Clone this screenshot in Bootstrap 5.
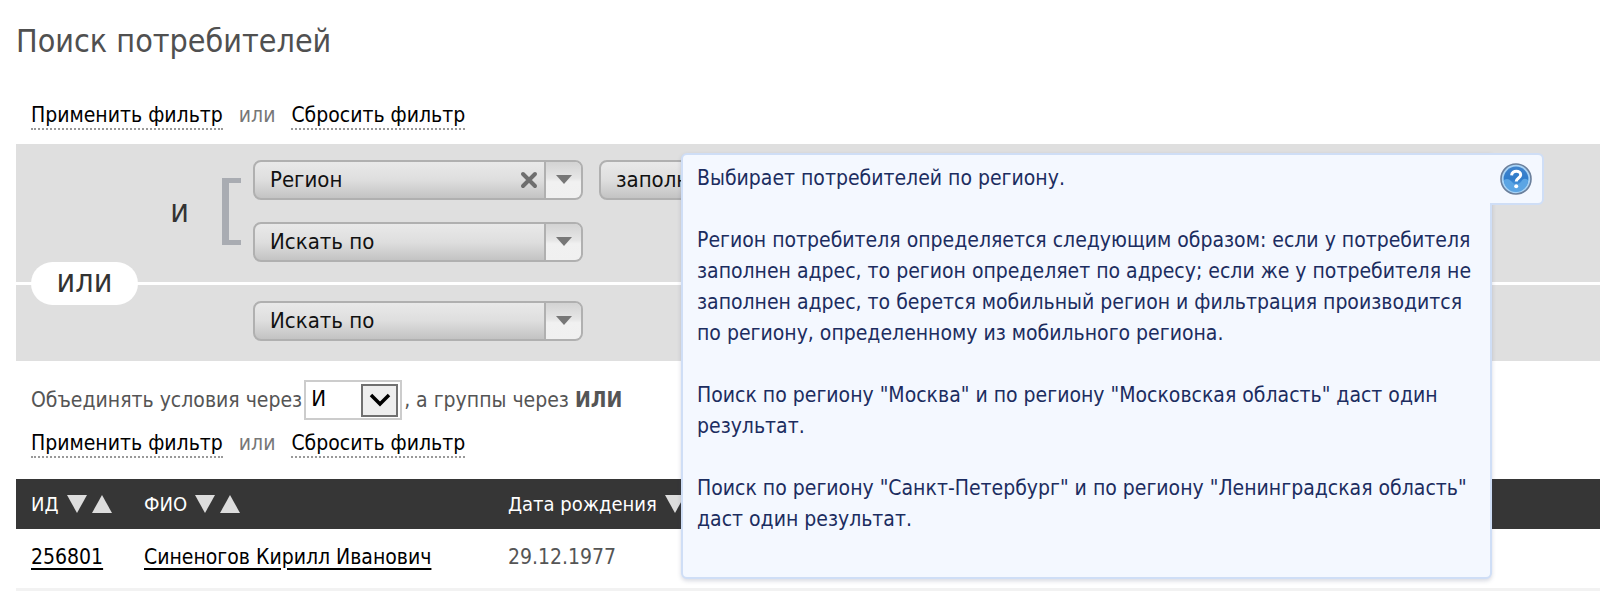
<!DOCTYPE html>
<html lang="ru">
<head>
<meta charset="utf-8">
<meta name="viewport" content="width=device-width, initial-scale=1">
<title>Поиск потребителей</title>
<link href="https://cdn.jsdelivr.net/npm/bootstrap@5.3.0/dist/css/bootstrap.min.css" rel="stylesheet">
<style>
body{font-family:"DejaVu Sans Condensed","DejaVu Sans",sans-serif;font-stretch:condensed;font-size:21px;line-height:30px;color:#555;background:#fff}
.page{padding-left:16px}
.page-title{font-size:32px;line-height:40px;color:#505050;margin:0;padding:21px 0 41px}
.filter-links{padding:0 0 14px 15px;gap:16px;line-height:26px}
.filter-links a{color:#000;text-decoration:none;border-bottom:2px dotted #999;white-space:nowrap}
.filter-links span{color:#777}
.rule-group{background:#dfdfdf;padding:16px 0 20px}
.rule-group+.rule-group{border-top:3px solid #fff}
.join-label{width:206px;padding-right:33px;font-size:32px;color:#333}
.bracket{width:19px;height:67px;border:5px solid #a9acb2;border-left-width:7px;border-right:0;margin-right:12px}
.rules{gap:22px}
.no-bracket{margin-left:237px}
.combo{width:330px;height:40px;border:2px solid #b0b0b0;border-radius:8px;background:linear-gradient(#e9e9e9,#dedede 50%,#c3c3c3);overflow:hidden}
.combo select{appearance:none;border:0;background:transparent;color:#111;font-size:22px;line-height:26px;padding:5px 0 5px 15px;min-width:0;outline-offset:-2px}
.combo button{border:0;padding:0;background:transparent}
.combo .clear-btn{width:30px}
.combo .drop-btn{width:37px;border-left:2px solid #b0b0b0;background:linear-gradient(#d3d3d3,#e6e6e6 45%,#f1f1f1 55%,#f0f0f0)}
.or-pill{left:15px;top:118px;width:107px;height:43px;border-radius:22px;background:#fff;font-size:32px;line-height:38px;color:#333;z-index:1}
.hint{left:82px;top:-7px;width:811px;height:426px;background:#f4f8ff;border:2px solid #cfdef6;border-radius:6px 0 6px 6px;box-shadow:0 2px 4px rgba(60,70,110,.2);color:#1c2d60;font-size:21px;line-height:31px;padding:8px 14px;z-index:3}
.hint p{margin:0 0 31px}
.hint-tab{left:100%;top:-2px;width:54px;height:52px;background:#f4f8ff;border:2px solid #cfdef6;border-left:0;border-radius:0 6px 6px 0;padding:0}
.join-row{padding:19px 0 0 15px}
.join-row .op-select{width:98px;height:40px;border:2px solid #ccc;margin:0 2px;background:#fff}
.op-select select{appearance:none;border:0;background:transparent;color:#000;font-size:22px;line-height:26px;padding:3px 0 5px 5px}
.op-select button{width:37px;height:33px;border:2px solid #707070;background:#eee;padding:0;margin-right:2px}
.filter-links.lower{padding-top:10px;padding-bottom:21px}
.people{width:100%;table-layout:fixed;margin:0}
.people th{background:#363636;color:#fff;font-weight:400;font-size:20px;height:50px;padding:0;white-space:nowrap}
.people td{height:61px;padding:0 0 4px;border-bottom:4px solid #f2f2f2;white-space:nowrap}
.people th:first-child,.people td:first-child{padding-left:15px}
.people a{color:#000;text-underline-offset:4px;text-decoration-thickness:2px}
.people button{border:0;background:none;padding:0;width:20px;margin-left:8px;line-height:1}
.people button+button{margin-left:5px}
.people svg{display:block}
.people .c-id{width:128px}
.people .c-name{width:364px}
</style>
</head>
<body>
<main class="page">
  <h1 class="page-title fw-normal">Поиск потребителей</h1>

  <div class="filter-links d-flex">
    <a href="#">Применить фильтр</a><span>или</span><a href="#">Сбросить фильтр</a>
  </div>

  <section class="position-relative" aria-label="Условия фильтра">
    <div class="rule-group d-flex align-items-center">
      <div class="join-label text-end flex-shrink-0">и</div>
      <div class="bracket flex-shrink-0"></div>
      <div class="rules d-flex flex-column">
        <div class="d-flex gap-3">
          <div class="combo d-flex flex-shrink-0">
            <select class="flex-grow-1" aria-label="Поле"><option>Регион</option></select>
            <button class="clear-btn d-flex align-items-center justify-content-center" type="button" aria-label="Очистить"><svg width="18" height="18" viewBox="0 0 18 18"><path d="M3 3l12 12M15 3L3 15" stroke="#6e6e6e" stroke-width="4" stroke-linecap="round"/></svg></button>
            <button class="drop-btn d-flex align-items-center justify-content-center" type="button" aria-label="Открыть"><svg width="16" height="10" viewBox="0 0 16 10"><path d="M0 0h16L8 9z" fill="#777"/></svg></button>
          </div>
          <div class="position-relative">
            <div class="combo d-flex">
              <select class="flex-grow-1" aria-label="Условие"><option>заполнен</option></select>
              <button class="drop-btn d-flex align-items-center justify-content-center" type="button" aria-label="Открыть условие"><svg width="16" height="10" viewBox="0 0 16 10"><path d="M0 0h16L8 9z" fill="#777"/></svg></button>
            </div>
            <div class="hint position-absolute" role="tooltip">
              <p>Выбирает потребителей по региону.</p>
              <p>Регион потребителя определяется следующим образом: если у потребителя заполнен адрес, то регион определяет по адресу; если же у потребителя не заполнен адрес, то берется мобильный регион и фильтрация производится по региону, определенному из мобильного региона.</p>
              <p>Поиск по региону "Москва" и по региону "Московская область" даст один результат.</p>
              <p>Поиск по региону "Санкт-Петербург" и по региону "Ленинградская область" даст один результат.</p>
              <button class="hint-tab position-absolute d-flex align-items-center justify-content-center" type="button" aria-label="Справка">
                <svg width="32" height="32" viewBox="0 0 32 32"><defs><linearGradient id="hg" x1="0" y1="0" x2="0" y2="1"><stop offset="0" stop-color="#3f83cc"/><stop offset=".5" stop-color="#2f7ccb"/><stop offset="1" stop-color="#65b2ee"/></linearGradient></defs><circle cx="16" cy="16" r="15" fill="#a8d3f5" stroke="#6a7f9c" stroke-width="1.6"/><circle cx="16" cy="16" r="12.4" fill="url(#hg)"/><path d="M4 17a12 12 0 0 0 24 0c-3-2-5-2-7 2l-5 4-5-5c-2-2-4-3-7-1z" fill="#5ba5e4"/><path d="M11.6 12.4c.3-5.6 9.3-5.4 9.1-.4-.1 3-4.5 3-4.5 6.6" fill="none" stroke="#fff" stroke-width="3"/><circle cx="16.200" cy="23.200" r="2" fill="#fff"/></svg>
              </button>
            </div>
          </div>
        </div>
        <div class="combo d-flex">
          <select class="flex-grow-1" aria-label="Второе поле"><option>Искать по</option></select>
          <button class="drop-btn d-flex align-items-center justify-content-center" type="button" aria-label="Открыть второе поле"><svg width="16" height="10" viewBox="0 0 16 10"><path d="M0 0h16L8 9z" fill="#777"/></svg></button>
        </div>
      </div>
    </div>
    <div class="rule-group">
      <div class="combo no-bracket d-flex">
        <select class="flex-grow-1" aria-label="Поле второй группы"><option>Искать по</option></select>
        <button class="drop-btn d-flex align-items-center justify-content-center" type="button" aria-label="Открыть поле второй группы"><svg width="16" height="10" viewBox="0 0 16 10"><path d="M0 0h16L8 9z" fill="#777"/></svg></button>
      </div>
    </div>
    <div class="or-pill position-absolute text-center">или</div>
  </section>

  <div class="join-row d-flex align-items-center">
    <label for="op">Объединять условия через</label>
    <div class="op-select d-flex align-items-center">
      <select id="op" class="flex-grow-1"><option>И</option></select>
      <button class="d-flex align-items-center justify-content-center flex-shrink-0" type="button" aria-label="Открыть список"><svg width="22" height="16" viewBox="0 0 22 16"><path d="M2 3l9 9 9-9" fill="none" stroke="#000" stroke-width="3.500"/></svg></button>
    </div>
    <span>, а группы через <b>ИЛИ</b></span>
  </div>
  <div class="filter-links lower d-flex">
    <a href="#">Применить фильтр</a><span>или</span><a href="#">Сбросить фильтр</a>
  </div>

  <table class="people">
    <colgroup><col class="c-id"><col class="c-name"><col></colgroup>
    <thead><tr>
      <th><div class="d-flex align-items-center">ИД<button type="button" aria-label="ИД по убыванию"><svg width="20" height="18" viewBox="0 0 20 18"><path d="M0 0h20l-10 18z" fill="#ddd"/></svg></button><button type="button" aria-label="ИД по возрастанию"><svg width="20" height="18" viewBox="0 0 20 18"><path d="M0 18h20L10 0z" fill="#ddd"/></svg></button></div></th>
      <th><div class="d-flex align-items-center">ФИО<button type="button" aria-label="ФИО по убыванию"><svg width="20" height="18" viewBox="0 0 20 18"><path d="M0 0h20l-10 18z" fill="#ddd"/></svg></button><button type="button" aria-label="ФИО по возрастанию"><svg width="20" height="18" viewBox="0 0 20 18"><path d="M0 18h20L10 0z" fill="#ddd"/></svg></button></div></th>
      <th><div class="d-flex align-items-center">Дата рождения<button type="button" aria-label="Дата по убыванию"><svg width="20" height="18" viewBox="0 0 20 18"><path d="M0 0h20l-10 18z" fill="#ddd"/></svg></button></div></th>
    </tr></thead>
    <tbody><tr>
      <td><a href="#">256801</a></td>
      <td><a href="#">Синеногов Кирилл Иванович</a></td>
      <td>29.12.1977</td>
    </tr></tbody>
  </table>
</main>
<script src="https://cdn.jsdelivr.net/npm/bootstrap@5.3.0/dist/js/bootstrap.bundle.min.js"></script>
</body>
</html>
